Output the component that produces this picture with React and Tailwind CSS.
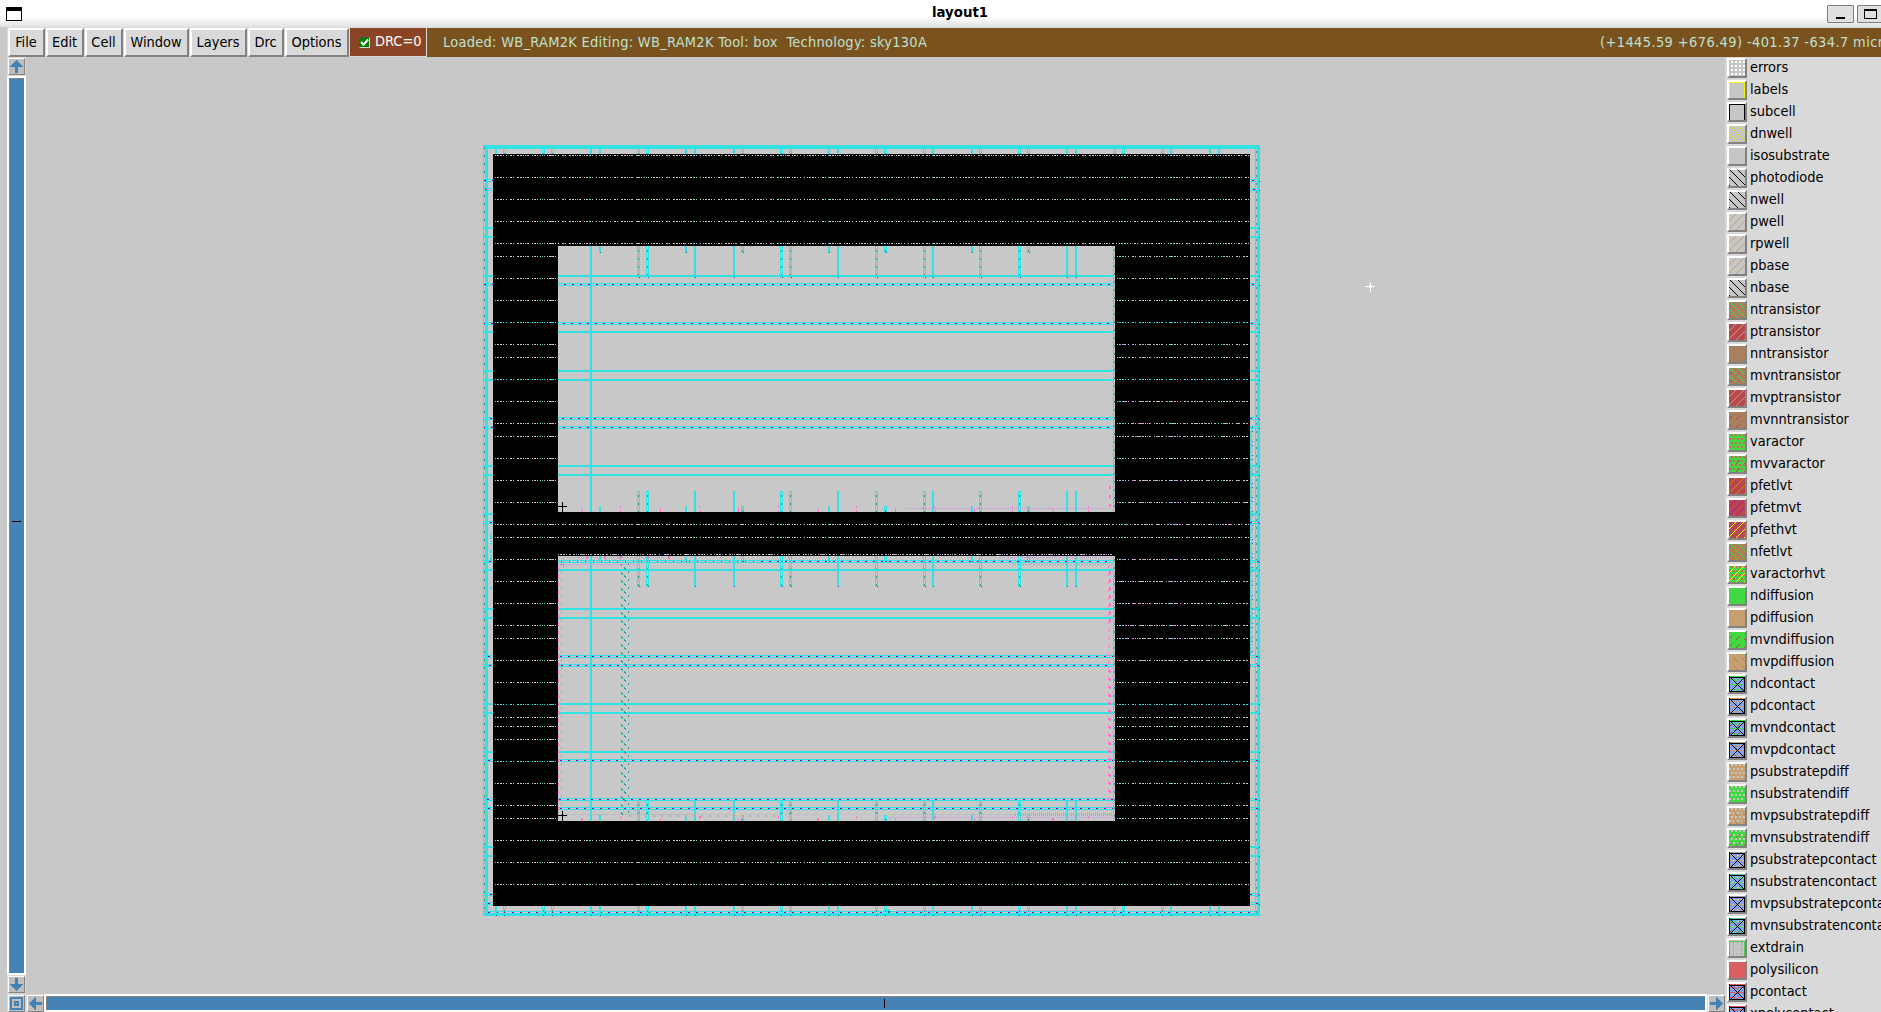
import React from "react";

const CYAN = "#32e2e2";
const TEAL = "#2aa5a5";
const PURPLE = "#9000d0";
const PINK = "#ff74c8";
const LILAC = "#bca0d4";
const OX = 26;
const OY = 57;

/* ---------- layer palette ---------- */

const back = (x, y) => (x - y + 15) % 8 === 0;
const fwd = (x, y) => (x + y + 2) % 8 === 0;
const fwdShort = (x, y) => fwd(x, y) && (y + 4) % 8 < 4;
const backShort = (x, y) => back(x, y) && (y + 4) % 8 < 4;
const grid = (x, y) => (x + 2) % 4 < 2 && (y + 3) % 4 < 2;
const checks = (x, y) => (x + (Math.floor(y / 4) % 2 ? 0 : 2)) % 4 < 2 && y % 4 < 2;
const waves = (x, y) => y === 0 || (y % 5 === 3 && x % 9 < 6) || (y % 5 === 4 && x % 9 > 4);
const waveBits = (x, y) => (y === 0 && x % 4 < 3) || (y % 5 === 3 && x % 5 < 2) || (y % 5 === 4 && x % 5 > 2);
const waveGaps = (x, y) => y % 5 === 3 && x % 5 > 2;
const edge = (x, y) => x === 0 || y === 0 || (x === 15 && y > 0);
const cross = (x, y) =>
  ((x === 0 || x === 15) && y > 0) || y === 1 || y === 15 || x === y || x === 16 - y;
const drain = (x, y) => (((x === 0 || x === 15) && y > 0) || y === 1) || ((x === 4 || x === 12) && y % 4 === 2);
const drainTan = (x, y) => ((x === 4 || x === 12) && y % 5 > 2) || (x === 8 && y % 6 === 2);

const GREEN = "#41d941";
const TAN = "#c8a070";
const BROWN = "#a88060";
const RED = "#b84850";
const POLY = "#dc5f5f";
const SKY = "#80a4fc";
const GREY = "#c6c6c6";

const contact = (c, extra = []) => [SKY, [waves, c], ...extra, [cross, "#000"]];
const subContact = (c, extra = []) => [SKY, [waveBits, c], [waveGaps, "#c6c6c6"], ...extra, [cross, "#000"]];

const layers = [
  ["errors", GREY, [grid, "#fff"]],
  ["labels", GREY, [edge, "#f4f400"]],
  ["subcell", GREY, [edge, "#000"]],
  ["dnwell", GREY, [back, "#e0e000"]],
  ["isosubstrate", GREY],
  ["photodiode", GREY, [back, "#000"]],
  ["nwell", GREY, [back, "#000"]],
  ["pwell", GREY, [fwd, TAN]],
  ["rpwell", GREY, [fwd, TAN]],
  ["pbase", GREY, [fwd, TAN]],
  ["nbase", GREY, [back, "#000"]],
  ["ntransistor", BROWN, [back, GREEN]],
  ["ptransistor", RED, [fwd, TAN]],
  ["nntransistor", BROWN],
  ["mvntransistor", BROWN, [back, GREEN], [fwdShort, RED]],
  ["mvptransistor", RED, [fwd, TAN]],
  ["mvnntransistor", BROWN, [fwdShort, RED]],
  ["varactor", GREEN, [checks, POLY]],
  ["mvvaractor", GREEN, [checks, POLY], [fwdShort, RED]],
  ["pfetlvt", RED, [fwd, "#c89000"]],
  ["pfetmvt", RED, [fwd, "#d000a0"]],
  ["pfethvt", RED, [fwd, "#ffff00"]],
  ["nfetlvt", BROWN, [back, GREEN], [fwd, "#c89000"]],
  ["varactorhvt", GREEN, [checks, POLY], [fwd, "#ffff00"]],
  ["ndiffusion", GREEN],
  ["pdiffusion", TAN],
  ["mvndiffusion", GREEN, [fwdShort, RED]],
  ["mvpdiffusion", TAN, [backShort, BROWN]],
  ["ndcontact", ...contact(GREEN)],
  ["pdcontact", ...contact(TAN)],
  ["mvndcontact", ...contact(GREEN, [[fwdShort, RED]])],
  ["mvpdcontact", ...contact(TAN, [[backShort, BROWN]])],
  ["psubstratepdiff", TAN, [checks, GREY]],
  ["nsubstratendiff", GREEN, [checks, GREY]],
  ["mvpsubstratepdiff", TAN, [checks, GREY], [backShort, BROWN]],
  ["mvnsubstratendiff", GREEN, [checks, GREY], [fwdShort, RED]],
  ["psubstratepcontact", ...subContact(TAN)],
  ["nsubstratencontact", ...subContact(GREEN)],
  ["mvpsubstratepcontact", ...subContact(TAN)],
  ["mvnsubstratencontact", ...subContact(GREEN, [[fwdShort, RED]])],
  ["extdrain", GREY, [drain, "#48d048"], [drainTan, TAN]],
  ["polysilicon", POLY],
  ["pcontact", ...contact("#e05858")],
  ["xpolycontact", ...contact("#e05858")],
];

function pixels(test) {
  let d = "";
  for (let y = 0; y < 16; y++)
    for (let x = 0; x < 16; x++) if (test(x, y)) d += `M${x} ${y}h1v1h-1z`;
  return d;
}

function LayerRow({ layer }) {
  const [name, base, ...marks] = layer;
  return (
    <div className="flex h-[22px] shrink-0 items-center">
      <div className="h-5 w-5 shrink-0 border-2 border-t-white border-l-white border-r-[#828282] border-b-[#828282] bg-[#d9d9d9]">
        <svg className="block h-4 w-4" viewBox="0 0 16 16" shapeRendering="crispEdges">
          <rect width="16" height="16" fill={base} />
          {marks.map(([test, color], i) => (
            <path key={i} d={pixels(test)} fill={color} />
          ))}
        </svg>
      </div>
      <span className="-mt-0.5 ml-[3px] whitespace-nowrap">{name}</span>
    </div>
  );
}

/* ---------- layout drawing ---------- */

const H = [
  [275, 0], [283, 1, 564], [322, 1, 563], [331, 0], [370, 0], [379, 0], [417, 1, 562], [426, 1, 563], [465, 0], [474, 0],
  [560, 1, 561], [569, 0], [608, 0], [617, 0], [655, 1, 560], [664, 1, 561], [703, 0], [712, 0], [751, 0], [759, 1, 560],
  [798, 1, 559], [807, 1, 560],
];
const MARGIN_H = [...H, [179, 1, 564], [188, 1, 565], [227, 0], [236, 0], [513, 0], [521, 1, 562], [846, 0], [855, 0], [893, 1, 562], [902, 1, 560]];

/* [x, double rail, reach]: reach s = short stub, l = long stub, o = outside the macros */
const V = [
  [495, 0, "o"], [503, 1, "o"], [542, 1, "o"], [551, 1, "o"], [590, 0, "f"], [599, 0, "s"], [637, 1, "l"], [646, 1, "l"],
  [685, 0, "s"], [694, 0, "l"], [733, 0, "l"], [741, 1, "s"], [780, 1, "l"], [789, 1, "l"], [828, 0, "s"], [837, 0, "l"],
  [875, 1, "l"], [884, 1, "s"], [923, 1, "l"], [932, 0, "l"], [971, 0, "s"], [979, 1, "l"], [1018, 1, "l"], [1027, 1, "s"],
  [1066, 0, "l"], [1075, 0, "l"], [1113, 1, "o"], [1122, 1, "o"], [1161, 1, "o"], [1170, 0, "o"], [1209, 0, "o"], [1218, 0, "o"],
];

const FULL_ROWS = [155, 177, 199, 221, 243, 524, 537, 840, 862, 884];
const SIDE_ROWS = [256, 278, 300, 322, 344, 357, 379, 401, 423, 436, 458, 480, 502, 559, 581, 603, 625, 638, 660, 682, 704, 717, 726, 739, 761, 783, 805, 818];
const CYAN_ROWS = [322, 379, 704, 761];
const DOTS = "1 1 2 1 2 1 1 2 1 3 2 1 1 3 2 1 2 1 1 1 1 1 2 3 1 1 2 1 1 2 1 3 1 2";

const Line = ({ x1, y1, x2, y2, c, w = 1, dash, off }) => (
  <line
    x1={x1} y1={y1} x2={x2} y2={y2}
    stroke={c} strokeWidth={w} strokeDasharray={dash} strokeDashoffset={off}
  />
);
const Hl = ({ x1, x2, y, c = CYAN, w = 1, dash, off }) => <Line x1={x1} x2={x2} y1={y + w / 2} y2={y + w / 2} c={c} w={w} dash={dash} off={off} />;
const Vl = ({ y1, y2, x, c = CYAN, w = 1, dash, off }) => <Line y1={y1} y2={y2} x1={x + w / 2} x2={x + w / 2} c={c} w={w} dash={dash} off={off} />;

function Wire({ x1, x2, y, dbl, phase }) {
  if (!dbl) return <Hl x1={x1} x2={x2} y={y} w={2} />;
  return (
    <>
      <Hl x1={x1} x2={x2} y={y} />
      <Hl x1={x1} x2={x2} y={y + 1} c={PURPLE} dash="2 6" off={(((x1 - phase) % 8) + 8) % 8} />
      <Hl x1={x1} x2={x2} y={y + 2} />
    </>
  );
}

function Post({ x, y1, y2, dbl, tip, cap }) {
  return (
    <>
      {dbl ? (
        <>
          <Vl x={x} y1={y1} y2={y2} />
          <Vl x={x + 1} y1={y1} y2={y2} c={TEAL} dash="2 6" off={4} />
          <Vl x={x + 2} y1={y1} y2={y2} />
        </>
      ) : (
        <Vl x={x} y1={y1} y2={y2} w={2} />
      )}
      {tip && <rect x={x + (dbl ? 2 : 1)} y={y2 - 1} width="1" height="1" fill="#2060b0" />}
      {dbl && cap ? <rect x={x} y={y1} width="3" height="1" fill={CYAN} /> : null}
    </>
  );
}

function Macro({ top, bottom }) {
  const up = top < 400;
  return (
    <g>
      <rect x="558" y={top} width="557" height={bottom - top} fill="#c8c8c8" />
      {V.map(([x, dbl, r]) => {
        if (r === "o") return null;
        if (r === "f") return <Post key={x} x={x} y1={top} y2={bottom} />;
        const drop = up ? (r === "l" ? 32 : 7) : r === "l" ? 31 : 6;
        const rise = r === "l" ? 21 : 6;
        return (
          <g key={x}>
            <Post x={x} dbl={dbl} y1={top} y2={top + drop} tip />
            <Post x={x} dbl={dbl} y1={bottom - rise} y2={bottom} cap />
          </g>
        );
      })}
      {H.filter(([y]) => y > top && y < bottom).map(([y, dbl, phase]) => (
        <Wire key={y} x1={558} x2={1114} y={y} dbl={dbl} phase={phase} />
      ))}
      <Vl x={1113} y1={top} y2={bottom} />
      <Vl x={1114} y1={top} y2={bottom} c={TEAL} dash="2 6" off={5} />
      <Vl x={1110} y1={top + 10} y2={bottom} c="#b0b0b0" dash="1 7" />
    </g>
  );
}

function LayoutDrawing() {
  return (
    <svg className="block h-[937px] w-[1699px] shrink-0" viewBox={`${OX} ${OY} 1699 937`} shapeRendering="crispEdges">
      {/* power ring */}
      <rect x="483" y="145" width="777" height="4" fill={CYAN} />
      <rect x="483" y="913" width="777" height="3" fill={CYAN} />
      <Hl x1={488} x2={1257} y={911} />
      <Hl x1={488} x2={1257} y={912} c={PURPLE} dash="2 6" />
      <Vl x={483} y1={145} y2={916} />
      <Vl x={484} y1={147} y2={913} c={TEAL} dash="2 6" />
      <Vl x={485} y1={145} y2={916} w={3} />
      <Vl x={1255} y1={149} y2={913} />
      <Vl x={1256} y1={151} y2={913} c={TEAL} dash="2 6" />
      <Vl x={1257} y1={145} y2={916} w={3} />
      {V.map(([x, dbl]) => (
        <g key={x}>
          <Post x={x} dbl={dbl} y1={149} y2={154} />
          <Post x={x} dbl={dbl} y1={906} y2={913} />
          <rect x={x + 1} y="915" width="1" height="1" fill="#2060b0" />
        </g>
      ))}
      {MARGIN_H.map(([y, dbl, phase]) => (
        <g key={y}>
          <Wire x1={484} x2={493} y={y} dbl={dbl} phase={phase} />
          <Wire x1={1250} x2={1259} y={y} dbl={dbl} phase={phase} />
          <rect x="1259" y={y + 1 + dbl} width="1" height="1" fill="#2060b0" />
        </g>
      ))}
      <Vl x={1250} y1={427} y2={655} w={2} dash="3 1 2 1 4 1" />
      <Vl x={1252} y1={427} y2={655} c="#2070c0" dash="1 3 1 9" />
      <Vl x={490} y1={533} y2={560} w={2} dash="1 1 4 2 1 1 1 6 3 2" />
      <rect x="490" y="587" width="2" height="2" fill={CYAN} />

      {/* dense cell area */}
      <rect x="493" y="154" width="757" height="752" fill="#000" />
      {FULL_ROWS.map((y) => (
        <Hl key={y} x1={495} x2={1249} y={y} c="#c8c8c8" dash={DOTS} />
      ))}
      {SIDE_ROWS.map((y) => (
        <g key={y}>
          <Hl x1={495} x2={556} y={y} c={CYAN_ROWS.includes(y) ? CYAN : "#c8c8c8"} dash={DOTS} />
          <Hl x1={1117} x2={1249} y={y} c={CYAN_ROWS.includes(y) ? CYAN : "#c8c8c8"} dash={DOTS} />
        </g>
      ))}
      {[344, 357, 401, 423, 436, 480, 502, 524, 559, 581, 603, 625, 638, 660].map((y, i) => (
        <g key={y}>
          <Hl x1={1120} x2={y > 400 ? 1185 : 1168} y={y} c="#f080d0" dash="1 11 1 14 2 10 1 8" off={i * 3} />
          <Hl x1={1124} x2={y > 400 ? 1248 : 1160} y={y} c={LILAC} dash="1 7 2 9 1 9 2 11" off={i * 4} />
        </g>
      ))}
      {[...FULL_ROWS, ...SIDE_ROWS].map((y) => (
        <g key={y}>
          {V.filter(([x, , r]) => r === "o" || FULL_ROWS.includes(y)).map(([x]) =>
            x > 1110 && x < 1117 && !FULL_ROWS.includes(y) ? null : (
              <rect key={x} x={x} y={y} width="1" height="1" fill={CYAN} />
            )
          )}
        </g>
      ))}
      <Hl x1={558} x2={1115} y={554} c="#c8c8c8" dash={DOTS} />
      <Hl x1={558} x2={1115} y={554} c={LILAC} dash="1 7 1 3" />
      <rect x="661" y="554" width="2" height="1" fill="#00f" />
      <rect x="680" y="554" width="1" height="1" fill="#ff0" />

      <Macro top={246} bottom={512} />
      <Macro top={556} bottom={821} />

      {/* signal routing in the upper macro */}
      <Hl x1={906} x2={1112} y={508} c={LILAC} dash="1 1" />
      {[581, 620, 660, 699, 738, 778, 817, 856, 895, 934, 974, 1012, 1052, 1088].map((x, i) => (
        <g key={x}>
          <rect x={x} y={i % 2 ? 506 : 508} width="1" height="2" fill={PINK} />
          <rect x={x + (i % 3 === 0 ? 1 : 0)} y="510" width="1" height="2" fill={PINK} />
          <rect x={x} y={i % 2 ? 816 : 818} width={i % 3 ? 1 : 2} height="3" fill={PINK} />
        </g>
      ))}
      <Vl x={1109} y1={486} y2={508} w={2} c={PINK} dash="3 6" />

      {/* signal routing in the lower macro */}
      <Hl x1={561} x2={661} y={557} c={LILAC} dash="1 1" />
      <Hl x1={1000} x2={1112} y={557} c={LILAC} dash="1 1" />
      <Hl x1={558} x2={637} y={564} c={LILAC} dash="1 1" />
      <Hl x1={1013} x2={1112} y={564} c={LILAC} dash="1 1" />
      <Hl x1={560} x2={760} y={561} c="#d8d8e8" dash="1 1 1 5" />
      <Vl x={558} y1={567} y2={812} c={PINK} dash="3 5" />
      <Vl x={561} y1={557} y2={812} c={PINK} dash="3 5" off={2} />
      <Vl x={563} y1={558} y2={568} c={PINK} dash="4 2" />
      {[586, 604, 619, 647, 668].map((x) => (
        <rect key={x} x={x} y="556" width="2" height="3" fill={PINK} />
      ))}
      <Vl x={621} y1={572} y2={814} c={TEAL} dash="2 6" />
      <Vl x={622} y1={573} y2={815} c={TEAL} dash="2 6" />
      <Vl x={624} y1={567} y2={807} c={TEAL} dash="2 6" />
      <Vl x={625} y1={568} y2={808} c={TEAL} dash="2 6" />
      <Vl x={628} y1={563} y2={815} c={TEAL} dash="2 6" />
      <Vl x={621} y1={556} y2={572} c={TEAL} dash="2 6" />
      <Vl x={1108} y1={566} y2={811} c={PINK} dash="2 4 1 1" />
      <Vl x={1109} y1={566} y2={622} w={2} c={PINK} dash="3 5" off={3} />
      <Vl x={1109} y1={670} y2={794} w={2} c={PINK} dash="3 5" />
      <Hl x1={561} x2={694} y={814} c={LILAC} dash="1 1" />
      <Hl x1={694} x2={820} y={814} c="#b0b0b0" dash="1 3" />
      <Hl x1={629} x2={780} y={815} w={2} c="#b0b0b0" dash="2 6" />
      <Hl x1={891} x2={1112} y={814} c="#b4a4c4" dash="1 1" />
      <Hl x1={888} x2={1112} y={817} c={LILAC} dash="1 1" />
      <Hl x1={1001} x2={1112} y={820} c={LILAC} dash="1 1" />
      <Hl x1={1014} x2={1112} y={813} c={LILAC} dash="1 1" off={1} />
      <Hl x1={1014} x2={1112} y={815} c={LILAC} dash="1 1" off={1} />
      <rect x="738" y="814" width="2" height="1" fill="#e0e000" />
      <rect x="890" y="814" width="1" height="1" fill="#e0e000" />
      <Hl x1={896} x2={1110} y={910} c={LILAC} dash="1 1" />
      <rect x="887" y="909" width="3" height="2" fill={CYAN} />
      <rect x="888" y="911" width="2" height="2" fill="#2070c0" />

      {/* origin marks and cursor */}
      <Hl x1={558} x2={567} y={506} c="#000" />
      <Vl x={562} y1={502} y2={512} c="#000" />
      <Hl x1={558} x2={567} y={815} c="#000" />
      <Vl x={562} y1={811} y2={821} c="#000" />
      <Hl x1={1365} x2={1375} y={286} c="#fff" />
      <Vl x={1370} y1={282} y2={292} c="#fff" />
      <rect x="1369" y="285" width="3" height="3" fill="#fff" />
    </svg>
  );
}

/* ---------- window chrome ---------- */

const menus = [
  ["File", "w-[37px]"],
  ["Edit", "w-[38px]"],
  ["Cell", "w-[38px]"],
  ["Window", "w-[65px]"],
  ["Layers", "w-[57px]"],
  ["Drc", "w-[36px]"],
  ["Options", "w-[64px]"],
];

const raised = "border border-t-white border-l-white border-r-[#828282] border-b-[#828282]";

function Arrow({ turn }) {
  return (
    <div className={`h-[17px] w-[17px] shrink-0 bg-[#bebebe] ${raised}`}>
      <svg className={`block h-[15px] w-[15px] ${turn}`} viewBox="0 0 15 15" shapeRendering="crispEdges">
        <path d="M7.500 1L14 8H9.200V14H6.200V8H1z" fill="#4682b4" />
      </svg>
    </div>
  );
}

export default function App() {
  return (
    <div className="flex h-[1012px] w-[1881px] flex-col overflow-hidden bg-[#c8c8c8] font-['DejaVu_Sans_Condensed','DejaVu_Sans',sans-serif] text-[14.45px] leading-4 text-black [font-stretch:condensed]">
      <header className="relative flex h-[27px] shrink-0 items-center bg-linear-to-b from-white from-60% to-[#e2e2e2] pl-1.5">
        <div className="h-3.5 w-4 border border-t-4 border-black bg-white" />
        <div className="absolute inset-x-0 top-[5px] pr-px pl-10 text-center font-['DejaVu_Sans',sans-serif] text-[13.3px] font-bold [font-stretch:normal]">
          layout1
        </div>
        <div className="absolute top-[5px] left-[1827px] flex gap-[3px]">
          <div className="flex h-[18px] w-[27px] items-end justify-center rounded-[1px] border border-[#808080] bg-[#e0e0e0] pb-[3px]">
            <div className="h-0.5 w-[9px] bg-black" />
          </div>
          <div className="flex h-[18px] w-[27px] items-center justify-center rounded-[1px] border border-[#808080] bg-[#e0e0e0]">
            <div className="h-[10px] w-[13px] border border-t-2 border-black" />
          </div>
        </div>
      </header>

      <div className="flex min-h-0 flex-1 pl-[7px]">
        <div className="flex min-w-0 flex-1 flex-col">
          <nav className="flex h-[30px] shrink-0 border-t border-[#d9d9d9] bg-[#7a521e]">
            <div className="flex gap-px bg-[#d9d9d9] pr-px pl-px">
              {menus.map(([m, w]) => (
                <button
                  key={m}
                  className={`${w} h-[29px] border-2 border-t-white border-l-white border-r-[#828282] border-b-[#828282] bg-[#d9d9d9] pr-px pb-0.5 text-center whitespace-nowrap`}
                >
                  <span className="-mx-2">{m}</span>
                </button>
              ))}
              <div className="flex h-[28px] w-[76px] items-center bg-[#8b4525] pl-[9px] text-white">
                <div className="flex h-[11px] w-[11px] shrink-0 items-center justify-center border border-t-[#505050] border-r-[#d0d0d0] border-b-[#d0d0d0] border-l-[#505050] bg-[#008000]">
                  <svg className="h-[9px] w-[9px]" viewBox="0 0 9 9">
                    <path d="M1.200 4L3.500 6.800L8 1.500" fill="none" stroke="#fff" strokeWidth="2" />
                  </svg>
                </div>
                <span className="-mt-0.5 ml-[5px]">DRC=0</span>
              </div>
            </div>
            <div className="flex flex-1 items-center justify-between pb-0.5 tracking-[0.29px] whitespace-pre text-[#bfe0cf]">
              <span className="pl-4">Loaded: WB_RAM2K Editing: WB_RAM2K Tool: box  Technology: sky130A</span>
              <span className="w-[281px] overflow-hidden tracking-[0.4px]">(+1445.59 +676.49) -401.37 -634.7 microns</span>
            </div>
          </nav>

          <div className="flex min-h-0 flex-1">
            <div className="flex min-w-0 flex-1 flex-col">
              <div className="flex h-[937px] shrink-0">
                <div className="flex w-[19px] shrink-0 flex-col items-center gap-px bg-[#d9d9d9] pt-px pb-px">
                  <Arrow turn="rotate-0" />
                  <div className="flex w-[19px] flex-1 items-center border-2 border-white bg-[#4682b4] pb-2 shadow-[inset_1px_1px_0_#828282]">
                    <div className="mx-auto h-px w-[9px] bg-black" />
                  </div>
                  <Arrow turn="rotate-180" />
                </div>
                <LayoutDrawing />
              </div>
              <div className="flex h-[18px] shrink-0 overflow-hidden bg-[#d9d9d9] pt-px pl-px">
                <div className={`mr-0.5 flex h-[17px] w-[17px] shrink-0 items-center justify-center bg-[#bebebe] ${raised}`}>
                  <div className="flex h-[13px] w-[13px] items-center justify-center border-2 border-[#4682b4]">
                    <div className="h-[5px] w-[5px] border-2 border-[#4682b4] bg-[#bebebe]" />
                  </div>
                </div>
                <Arrow turn="-rotate-90" />
                <div className="-mt-px mr-px flex flex-1 items-center justify-center border-2 border-white bg-[#4682b4] shadow-[inset_1px_1px_0_#828282]">
                  <div className="mr-[-17px] h-[9px] w-px bg-black" />
                </div>
                <Arrow turn="rotate-90" />
              </div>
            </div>
            <aside className="w-[156px] shrink-0 overflow-hidden bg-[#d9d9d9] pl-0.5">
              {layers.map((l) => (
                <LayerRow key={l[0]} layer={l} />
              ))}
            </aside>
          </div>
        </div>
      </div>
    </div>
  );
}
